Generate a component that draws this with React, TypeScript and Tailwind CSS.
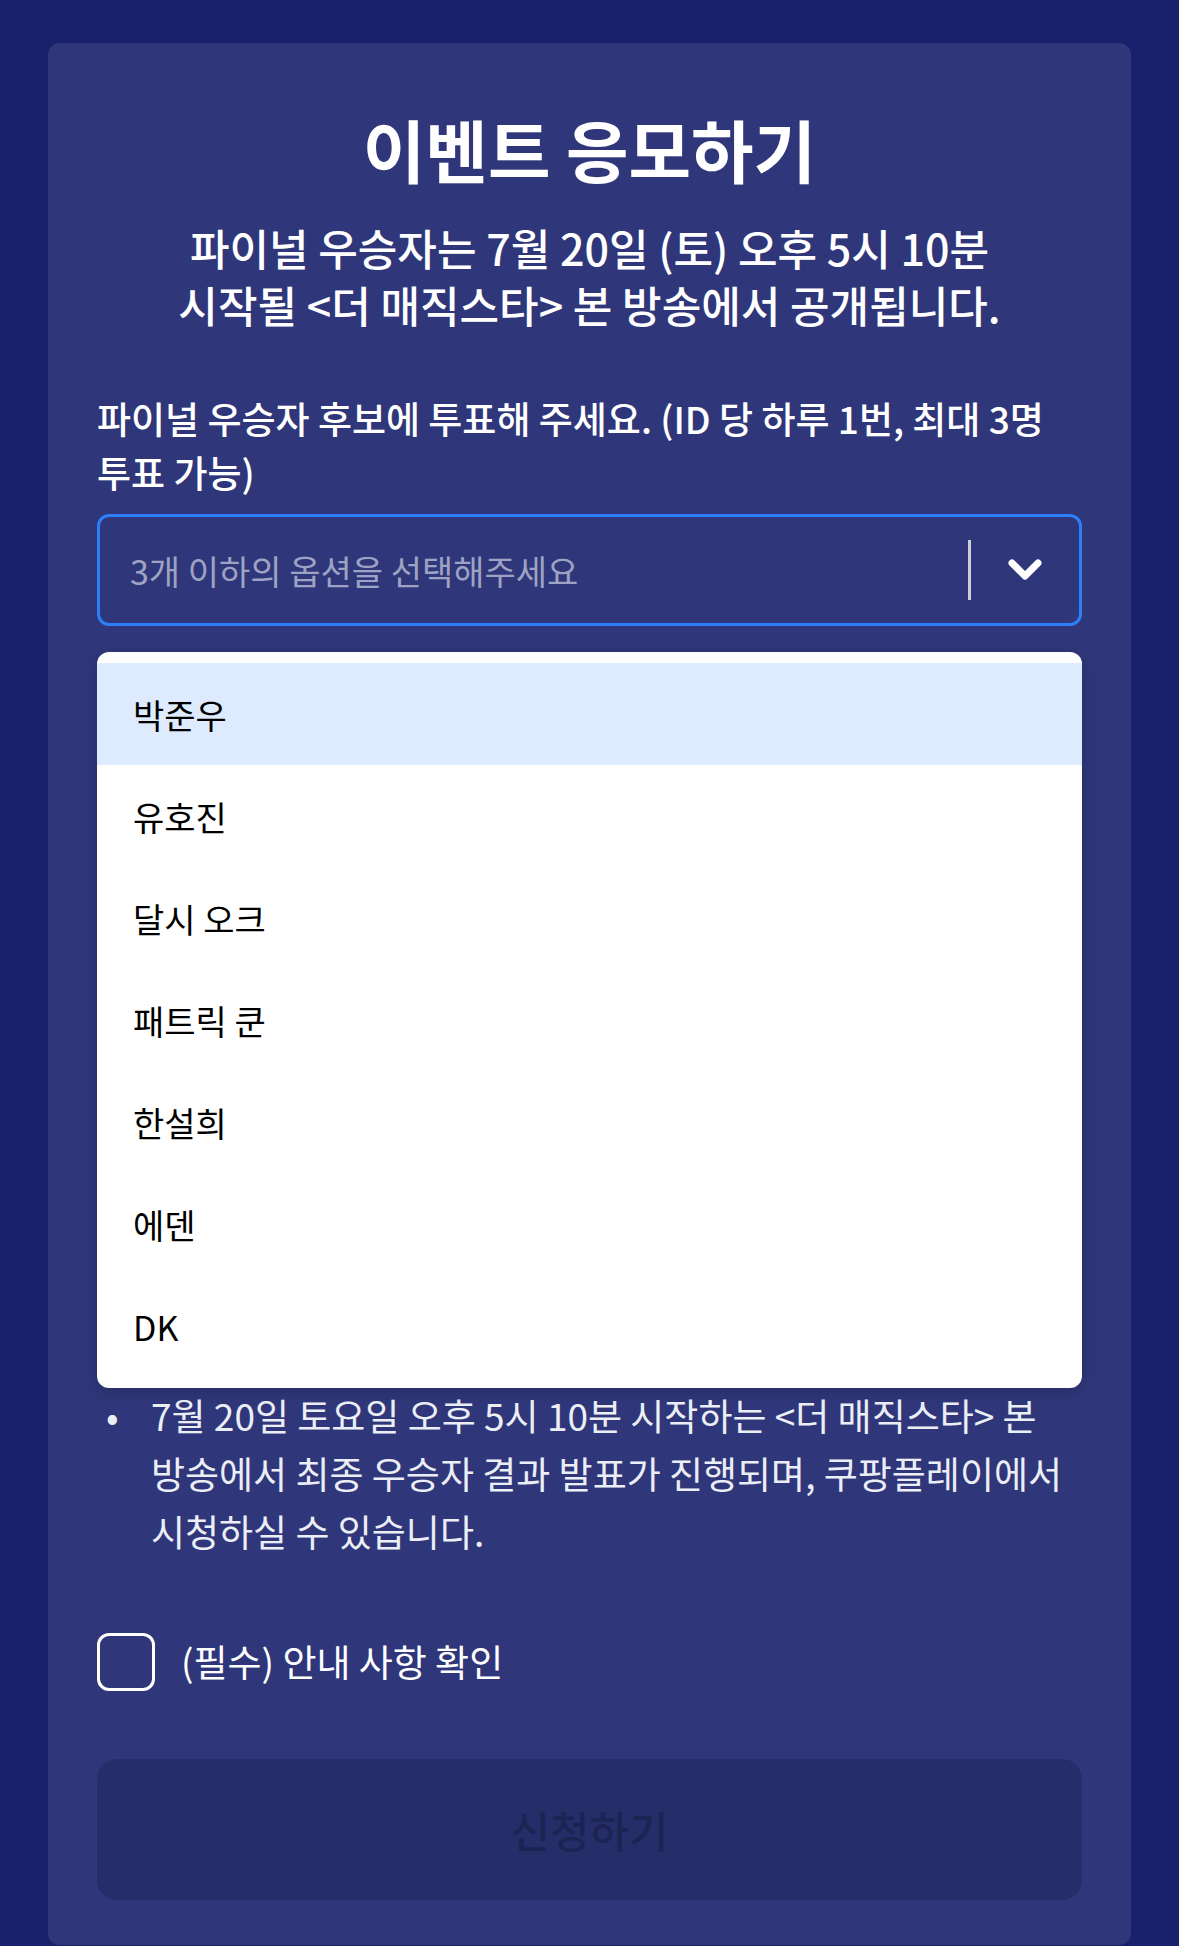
import { useState } from 'react';

const candidates = ['박준우', '유호진', '달시 오크', '패트릭 쿤', '한설희', '에덴', 'DK'];

export default function App() {
  const [checked, setChecked] = useState(false);
  const [active] = useState(0);

  return (
    <div
      className="min-h-screen bg-[#19216c] px-[48px] pt-[43px] break-keep"
      style={{ fontFamily: '"Noto Sans CJK KR", "Noto Sans", sans-serif' }}
    >
      <div className="rounded-[12px] bg-[#2f377a] px-[49px] pt-[71px] pb-[45px]">
        <h1 className="text-center text-[68px] leading-[70px] font-bold text-white">이벤트 응모하기</h1>
        <p className="mt-[35px] text-center text-[43px] leading-[57px] font-medium text-white">
          파이널 우승자는 7월 20일 (토) 오후 5시 10분
          <br />
          시작될 &lt;더 매직스타&gt; 본 방송에서 공개됩니다.
        </p>

        <p className="mt-[58px] text-[37px] leading-[54px] font-medium text-white">
          파이널 우승자 후보에 투표해 주세요. (ID 당 하루 1번, 최대 3명
          <br />
          투표 가능)
        </p>

        <div className="relative mt-[15px]">
          <div className="flex h-[112px] items-center rounded-[12px] border-[3px] border-[#2d7ff9] pl-[30px]">
            <span className="flex-1 text-[34px] text-[#9ea3c4]">3개 이하의 옵션을 선택해주세요</span>
            <div className="h-[60px] w-[3px] bg-[#cfcfd4]" />
            <div className="flex w-[108px] items-center justify-center">
              <svg width="36" height="24" viewBox="0 0 36 24" fill="none">
                <polyline
                  points="5,5 18,18 31,5"
                  stroke="white"
                  strokeWidth="7"
                  strokeLinecap="round"
                  strokeLinejoin="round"
                />
              </svg>
            </div>
          </div>

          <ul className="absolute top-[138px] left-0 right-0 z-10 rounded-[12px] bg-white py-[11px] shadow-[0_4px_14px_rgba(0,0,0,0.18)]">
            {candidates.map((name, i) => (
              <li
                key={name}
                className={`flex h-[102px] items-center px-[36px] text-[34px] text-black ${
                  i === active ? 'bg-[#deebff]' : ''
                }`}
              >
                {name}
              </li>
            ))}
          </ul>
        </div>

        <ul className="mt-[760px] text-[37px] leading-[58px] text-[#eceef6]">
          <li className="flex">
            <span className="w-[54px] shrink-0 pl-[9px]">•</span>
            <span>
              7월 20일 토요일 오후 5시 10분 시작하는 &lt;더 매직스타&gt; 본 방송에서 최종 우승자 결과 발표가 진행되며,
              쿠팡플레이에서 시청하실 수 있습니다.
            </span>
          </li>
        </ul>

        <label className="mt-[73px] flex cursor-pointer items-center gap-[26px]">
          <span
            onClick={() => setChecked(!checked)}
            className={`h-[58px] w-[58px] shrink-0 rounded-[12px] border-[3px] border-white ${
              checked ? 'bg-[#2d7ff9]' : ''
            }`}
          />
          <span className="text-[37px] text-white">(필수) 안내 사항 확인</span>
        </label>

        <button
          disabled={!checked}
          className="mt-[68px] flex h-[141px] w-full items-center justify-center rounded-[20px] bg-[#262e6a] text-[43px] font-medium text-[#1d2454]"
        >
          신청하기
        </button>
      </div>
    </div>
  );
}
